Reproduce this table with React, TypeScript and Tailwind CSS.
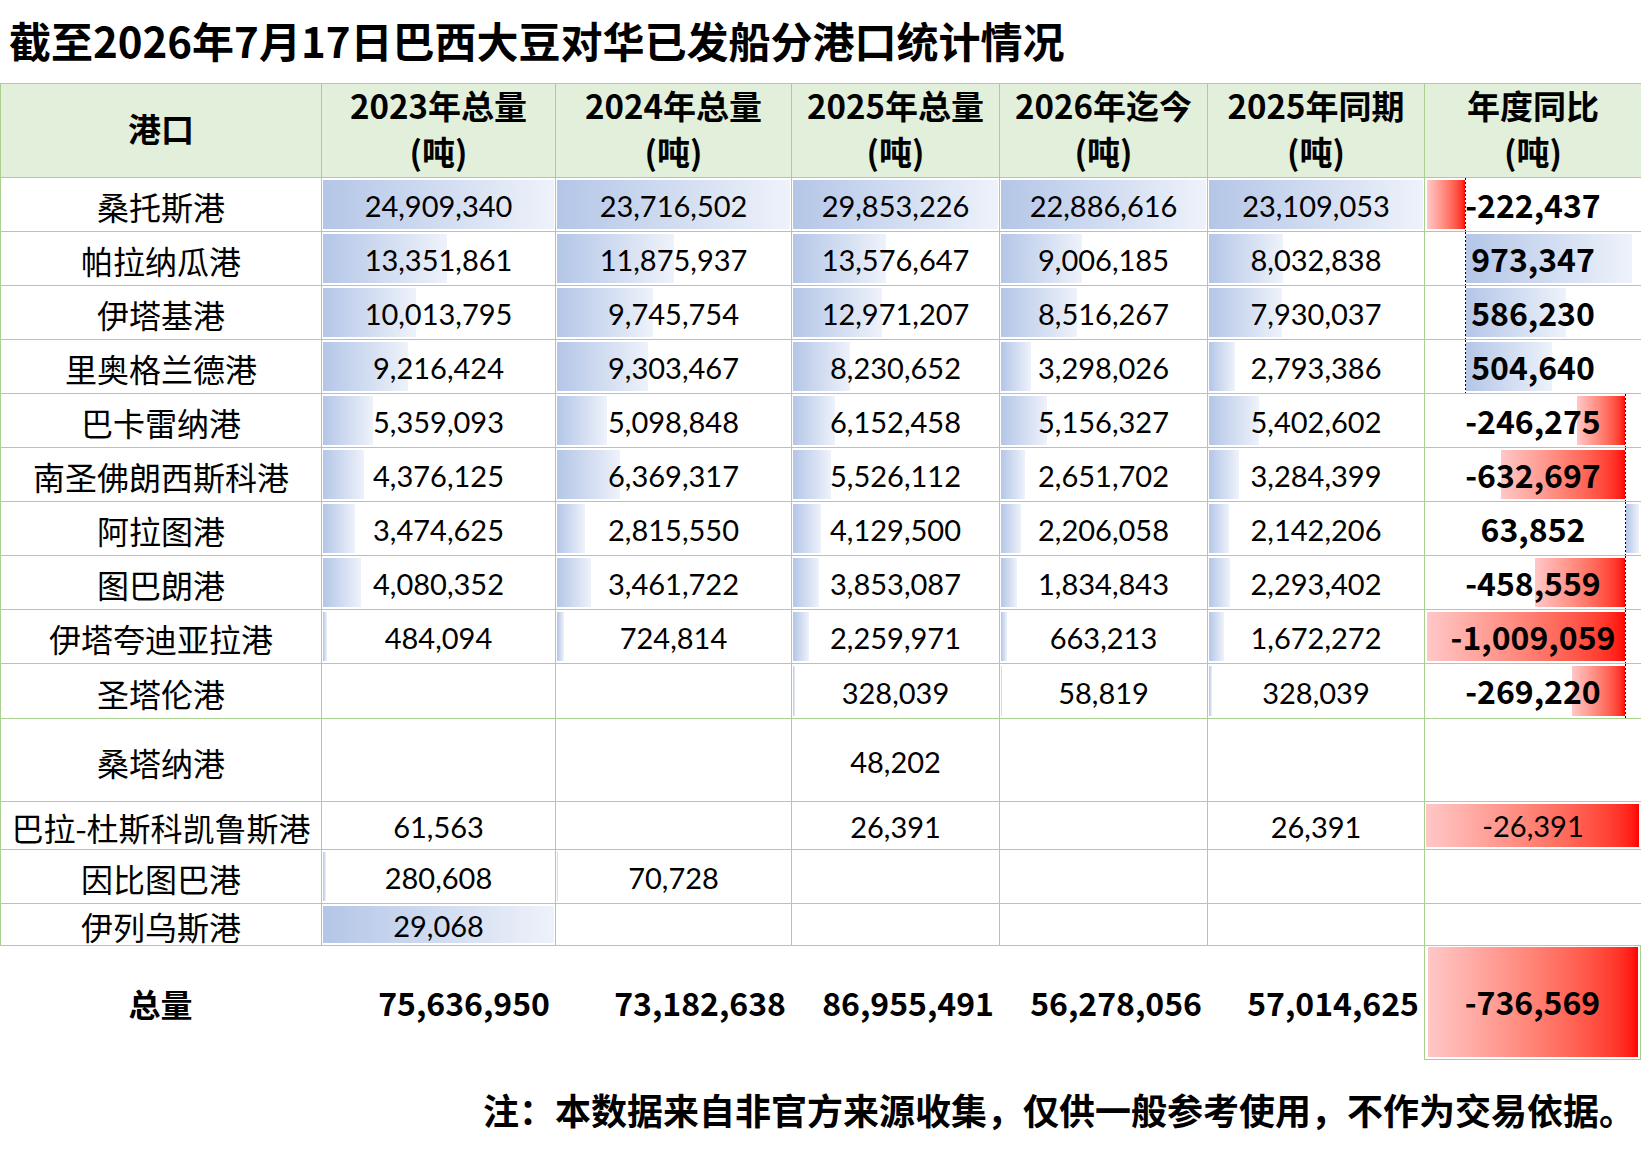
import React from 'react';

type Row = {
    name: string;
    h: string;
    v: (number | null)[];
    yoy: number | null;
    group?: 'A' | 'B';
    bars?: 'range' | 'self';
    full?: boolean;
};

const rows: Row[] = [
    {name: '桑托斯港', h: 'h-[54px]', v: [24909340, 23716502, 29853226, 22886616, 23109053], yoy: -222437, group: 'A', bars: 'range'},
    {name: '帕拉纳瓜港', h: 'h-[54px]', v: [13351861, 11875937, 13576647, 9006185, 8032838], yoy: 973347, group: 'A', bars: 'range'},
    {name: '伊塔基港', h: 'h-[54px]', v: [10013795, 9745754, 12971207, 8516267, 7930037], yoy: 586230, group: 'A', bars: 'range'},
    {name: '里奥格兰德港', h: 'h-[54px]', v: [9216424, 9303467, 8230652, 3298026, 2793386], yoy: 504640, group: 'A', bars: 'range'},
    {name: '巴卡雷纳港', h: 'h-[54px]', v: [5359093, 5098848, 6152458, 5156327, 5402602], yoy: -246275, group: 'B', bars: 'range'},
    {name: '南圣佛朗西斯科港', h: 'h-[54px]', v: [4376125, 6369317, 5526112, 2651702, 3284399], yoy: -632697, group: 'B', bars: 'range'},
    {name: '阿拉图港', h: 'h-[54px]', v: [3474625, 2815550, 4129500, 2206058, 2142206], yoy: 63852, group: 'B', bars: 'range'},
    {name: '图巴朗港', h: 'h-[54px]', v: [4080352, 3461722, 3853087, 1834843, 2293402], yoy: -458559, group: 'B', bars: 'range'},
    {name: '伊塔夸迪亚拉港', h: 'h-[54px]', v: [484094, 724814, 2259971, 663213, 1672272], yoy: -1009059, group: 'B', bars: 'range'},
    {name: '圣塔伦港', h: 'h-[55px]', v: [null, null, 328039, 58819, 328039], yoy: -269220, group: 'B', bars: 'range'},
    {name: '桑塔纳港', h: 'h-[83px]', v: [null, null, 48202, null, null], yoy: null},
    {name: '巴拉-杜斯科凯鲁斯港', h: 'h-[48px]', v: [61563, null, 26391, null, 26391], yoy: -26391, full: true},
    {name: '因比图巴港', h: 'h-[54px]', v: [280608, 70728, null, null, null], yoy: null, bars: 'range'},
    {name: '伊列乌斯港', h: 'h-[42px]', v: [29068, null, null, null, null], yoy: null, bars: 'self'},
];

const headers = ['2023年总量', '2024年总量', '2025年总量', '2026年迄今', '2025年同期', '年度同比'];
const widths = [234, 236, 208, 208, 217];
const maxes = [24909340, 23716502, 29853226, 22886616, 23109053];

// yoy data bar axis per group: offset of axis from cell left, px per tonne
const axis = {
    A: {at: 40, scale: 38 / 222437},
    B: {at: 200, scale: 198 / 1009059},
};

const grid = 'grid grid-cols-[321px_234px_236px_208px_208px_217px_217px] grid-rows-[100%]';
const cell = 'relative min-h-0 border-r border-b border-[#a9d08e] flex items-center justify-center';
const num = "font-['Lato','Noto_Sans_CJK_SC',sans-serif] text-[29px] leading-[34px] text-black";
const bold = "font-['Noto_Sans_CJK_SC',sans-serif] font-bold text-[32px] leading-[38px] text-black";

const fmt = (n: number) => n.toLocaleString('en-US');

function ValueCell({row, col}: {row: Row; col: number}) {
    const value = row.v[col];
    let bar = 0;
    if (value != null && row.bars === 'range') bar = (value / maxes[col]) * (widths[col] - 3);
    if (value != null && row.bars === 'self') bar = widths[col] - 3;
    return (
        <div className={cell}>
            {bar > 0 && (
                <div
                    className="absolute left-[1px] top-[2px] bottom-[2px] bg-gradient-to-r from-[#b4c6e7] to-[#eef2fa]"
                    style={{width: bar}}
                />
            )}
            {value != null && <span className={`relative pt-[3px] ${num}`}>{fmt(value)}</span>}
        </div>
    );
}

function YoyCell({row}: {row: Row}) {
    const v = row.yoy;
    if (v == null) return <div className={cell} />;
    if (row.full) {
        return (
            <div className={cell}>
                <div className="absolute left-[1px] right-[2px] top-[2px] bottom-[2px] bg-gradient-to-r from-[#ffc7c7] to-[#ff0000]" />
                <span className={`relative ${num}`}>{fmt(v)}</span>
            </div>
        );
    }
    const g = axis[row.group ?? 'A'];
    const w = Math.abs(v) * g.scale;
    return (
        <div className={cell}>
            {v < 0 ? (
                <div
                    className="absolute top-[2px] bottom-[2px] bg-gradient-to-r from-[#ffc7c7] to-[#ff0000]"
                    style={{left: g.at - w, width: w}}
                />
            ) : (
                <div
                    className="absolute top-[2px] bottom-[2px] bg-gradient-to-r from-[#b4c6e7] to-[#eef2fa]"
                    style={{left: g.at + 1, width: w}}
                />
            )}
            <div
                className="absolute top-0 bottom-0 w-px bg-[repeating-linear-gradient(to_bottom,#000_0_2px,transparent_2px_4px)]"
                style={{left: g.at}}
            />
            <span className={`relative -mt-[2px] ${bold}`}>{fmt(v)}</span>
        </div>
    );
}

export default function App() {
    return (
        <div className="w-[1641px] h-[1158px] bg-white overflow-hidden">
            {/* Title */}
            <div className="h-[83px] pl-[9px] pt-[16px]">
                <h1 className="font-['Noto_Sans_CJK_SC',sans-serif] font-bold text-[42px] leading-[48px] text-black">
                    截至2026年7月17日巴西大豆对华已发船分港口统计情况
                </h1>
            </div>

            {/* Header */}
            <div className={`${grid} h-[95px] border-t border-l border-[#a9d08e] bg-[#e2efda]`}>
                <div className={`${cell} pb-[6px]`}>
                    <span className="font-['Noto_Sans_CJK_SC',sans-serif] font-bold text-[33px] leading-[40px] text-black">港口</span>
                </div>
                {headers.map((h) => (
                    <div key={h} className={`${cell} flex-col pb-[6px]`}>
                        <span className="font-['Noto_Sans_CJK_SC',sans-serif] font-bold text-[33px] leading-[46px] text-black whitespace-nowrap">{h}</span>
                        <span className="font-['Noto_Sans_CJK_SC',sans-serif] font-bold text-[33px] leading-[46px] text-black">(吨)</span>
                    </div>
                ))}
            </div>

            {/* Body */}
            {rows.map((row) => (
                <div key={row.name} className={`${grid} ${row.h} border-l border-[#a9d08e]`}>
                    <div className={cell}>
                        <span className="font-['Noto_Sans_CJK_SC',sans-serif] text-[32px] leading-[38px] text-black whitespace-nowrap pt-[3px]">{row.name}</span>
                    </div>
                    {[0, 1, 2, 3, 4].map((c) => (
                        <ValueCell key={c} row={row} col={c} />
                    ))}
                    <YoyCell row={row} />
                </div>
            ))}

            {/* Total */}
            <div className={`${grid} h-[114px]`}>
                <div className="flex items-center justify-center">
                    <span className="font-['Noto_Sans_CJK_SC',sans-serif] font-bold text-[32px] leading-[38px] text-black">总量</span>
                </div>
                {[75636950, 73182638, 86955491, 56278056, 57014625].map((t) => (
                    <div key={t} className="flex items-center justify-end pr-[5px] pb-[3px]">
                        <span className={bold}>{fmt(t)}</span>
                    </div>
                ))}
                <div className="relative flex items-center justify-center border-l border-r border-b border-[#a9d08e] pb-[3px]">
                    <div className="absolute left-[3px] right-[2px] top-[1px] bottom-[2px] bg-gradient-to-r from-[#ffc7c7] to-[#ff0000]" />
                    <span className={`relative ${bold}`}>-736,569</span>
                </div>
            </div>

            {/* Note */}
            <div className="mt-[24px] pr-[6px] text-right">
                <p className="font-['Noto_Sans_CJK_SC',sans-serif] font-bold text-[36px] leading-[50px] text-black whitespace-nowrap">
                    注：本数据来自非官方来源收集，仅供一般参考使用，不作为交易依据。
                </p>
            </div>
        </div>
    );
}
